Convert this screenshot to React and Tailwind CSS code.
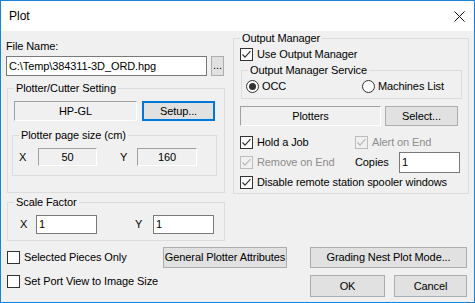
import React from "react";

const font = { fontFamily: '"Liberation Sans", Arial, sans-serif' };

const Check = ({ checked, disabled }) => (
  <span
    className={`flex h-[13px] w-[13px] shrink-0 items-center justify-center border ${
      disabled ? "border-[#bcbcbc]" : "border-[#333333] bg-white"
    }`}
  >
    {checked && (
      <svg width="11" height="11" viewBox="0 0 11 11">
        <polyline
          points="1.5,5.5 4,8.2 9.5,2.2"
          fill="none"
          stroke={disabled ? "#b8b8b8" : "#333333"}
          strokeWidth="1.2"
        />
      </svg>
    )}
  </span>
);

const CheckRow = ({ label, checked, disabled, className = "" }) => (
  <div className={`flex h-[20px] items-center ${className}`}>
    <Check checked={checked} disabled={disabled} />
    <span className={`ml-[4px] ${disabled ? "text-[#8d8d8d]" : ""}`}>{label}</span>
  </div>
);

const Radio = ({ checked, label }) => (
  <div className="flex h-[20px] items-center">
    <span className="flex h-[13px] w-[13px] items-center justify-center rounded-full border border-[#333333] bg-white">
      {checked && <span className="h-[7px] w-[7px] rounded-full bg-[#333333]" />}
    </span>
    <span className="ml-[3px]">{label}</span>
  </div>
);

const Group = ({ title, className = "", children }) => (
  <div className={`relative border border-[#dcdcdc] ${className}`}>
    <span className="absolute left-[6px] top-[-8px] bg-[#f0f0f0] px-[2px] leading-[14px]">
      {title}
    </span>
    {children}
  </div>
);

const Static = ({ children, className = "" }) => (
  <div
    className={`flex items-center justify-center border border-t-[#a0a0a0] border-l-[#a0a0a0] border-r-white border-b-white ${className}`}
  >
    {children}
  </div>
);

const Edit = ({ children, className = "" }) => (
  <div className={`flex items-center border border-[#7a7a7a] bg-white pl-[2px] ${className}`}>
    {children}
  </div>
);

const Button = ({ children, className = "", primary }) => (
  <div
    className={`flex items-center justify-center bg-[#e1e1e1] ${
      primary ? "border-2 border-[#0078d7]" : "border border-[#adadad]"
    } ${className}`}
  >
    {children}
  </div>
);

export default function App() {
  return (
    <div
      style={font}
      className="flex h-[303px] w-[475px] flex-col border border-[#1883d7] text-[11px] leading-[13px] tracking-[-0.1px] text-black"
    >
      <div className="flex h-[30px] shrink-0 items-center justify-between bg-white pl-[8px] pr-[9px]">
        <span className="text-[12px] tracking-normal">Plot</span>
        <svg width="11" height="11" viewBox="0 0 11 11">
          <path d="M0.5 0.5 L10.5 10.5 M10.5 0.5 L0.5 10.5" stroke="#111" strokeWidth="1" />
        </svg>
      </div>

      <div className="flex flex-1 flex-col bg-[#f0f0f0]">
        <div className="flex pl-[5px]">
          {/* left column */}
          <div className="flex w-[219px] flex-col">
            <div className="mt-[9px]">File Name:</div>
            <div className="mt-[3px] flex h-[20px]">
              <Edit className="w-[201px]">C:\Temp\384311-3D_ORD.hpg</Edit>
              <Button className="ml-[4px] w-[13px] items-end pb-[3px]">...</Button>
            </div>

            <Group title="Plotter/Cutter Setting" className="ml-[1px] mt-[12px] h-[105px] w-[218px]">
              <div className="ml-[6px] mt-[12px] flex h-[20px]">
                <Static className="w-[123px]">HP-GL</Static>
                <Button primary className="ml-[5px] w-[73px]">Setup...</Button>
              </div>
              <Group title="Plotter page size (cm)" className="ml-[4px] mt-[14px] h-[41px] w-[205px]">
                <div className="mt-[12px] flex h-[18px] items-center">
                  <span className="ml-[6px] w-[19px]">X</span>
                  <Static className="h-[18px] w-[59px]">50</Static>
                  <span className="ml-[23px] w-[17px]">Y</span>
                  <Static className="h-[18px] w-[60px]">160</Static>
                </div>
              </Group>
            </Group>

            <Group title="Scale Factor" className="ml-[1px] mt-[9px] h-[39px] w-[218px]">
              <div className="mt-[12px] flex h-[19px] items-center">
                <span className="ml-[12px] w-[16px]">X</span>
                <Edit className="h-[19px] w-[61px]">1</Edit>
                <span className="ml-[38px] w-[18px]">Y</span>
                <Edit className="h-[19px] w-[61px]">1</Edit>
              </div>
            </Group>
          </div>

          {/* right column */}
          <div className="ml-[8px] flex flex-col">
            <Group title="Output Manager" className="mt-[7px] h-[156px] w-[236px]">
              <CheckRow label="Use Output Manager" checked className="ml-[6px] mt-[5px]" />
              <Group title="Output Manager Service" className="ml-[7px] mt-[6px] h-[29px] w-[221px]">
                <div className="ml-[4px] mt-[5px] flex">
                  <div className="w-[116px]">
                    <Radio checked label="OCC" />
                  </div>
                  <Radio label="Machines List" />
                </div>
              </Group>
              <div className="ml-[6px] mt-[7px] flex h-[20px]">
                <Static className="w-[141px]">Plotters</Static>
                <Button className="ml-[4px] w-[73px]">Select...</Button>
              </div>
              <div className="ml-[6px] mt-[6px] flex">
                <CheckRow label="Hold a Job" checked className="w-[115px]" />
                <CheckRow label="Alert on End" checked disabled />
              </div>
              <div className="ml-[6px] flex">
                <CheckRow label="Remove on End" checked disabled className="w-[115px]" />
                <div className="flex h-[20px] items-center">
                  <span className="w-[44px]">Copies</span>
                  <Edit className="h-[21px] w-[61px]">1</Edit>
                </div>
              </div>
              <CheckRow label="Disable remote station spooler windows" checked className="ml-[6px]" />
            </Group>
          </div>
        </div>

        {/* bottom */}
        <div className="mt-[6px] flex pl-[6px]">
          <div className="w-[156px]">
            <CheckRow label="Selected Pieces Only" />
            <CheckRow label="Set Port View to Image Size" className="mt-[4px]" />
          </div>
          <div>
            <Button className="h-[21px] w-[124px]">General Plotter Attributes</Button>
          </div>
          <div className="ml-[23px] w-[157px]">
            <Button className="h-[21px] w-[157px]">Grading Nest Plot Mode...</Button>
            <div className="mt-[7px] flex">
              <Button className="h-[22px] w-[75px]">OK</Button>
              <Button className="ml-[9px] h-[22px] w-[73px]">Cancel</Button>
            </div>
          </div>
        </div>
      </div>
    </div>
  );
}
